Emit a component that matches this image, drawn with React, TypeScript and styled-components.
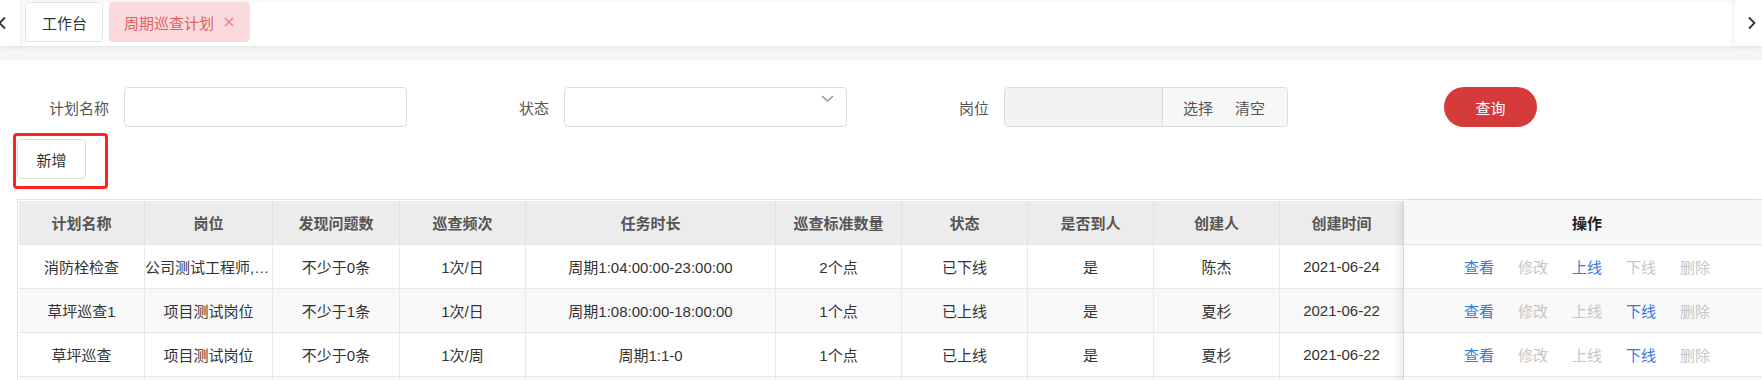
import styled, { createGlobalStyle } from 'styled-components';

const GlobalStyle = createGlobalStyle`
  html, body {
    margin: 0;
    padding: 0;
    background: #fff;
    overflow: hidden;
  }
  body {
    width: 1762px;
    font-family: "Liberation Sans", "Noto Sans CJK SC", sans-serif;
    font-size: 15px;
    color: #333;
  }
  * { box-sizing: border-box; }
`;

const Page = styled.div`
  width: 1762px;
  height: 380px;
  overflow: hidden;
`;

/* ---------- tab bar ---------- */

const TabBar = styled.div`
  display: flex;
  height: 46px;
  background: #fff;
  box-shadow: inset 0 3px 4px -2px rgba(0, 0, 0, 0.06), 0 2px 4px rgba(0, 0, 0, 0.05);
  position: relative;
  z-index: 1;
`;

const ArrowBtn = styled.div<{ $side: 'left' | 'right' }>`
  width: ${p => (p.$side === 'left' ? 20 : 27)}px;
  flex-shrink: 0;
  display: flex;
  align-items: center;
  justify-content: ${p => (p.$side === 'left' ? 'flex-start' : 'flex-end')};
  padding-right: ${p => (p.$side === 'right' ? 5 : 0)}px;
  background: #fff;
  box-shadow: ${p => (p.$side === 'left' ? '3px 0 4px rgba(0,0,0,0.05)' : '-3px 0 4px rgba(0,0,0,0.05)')};
  z-index: 1;
  overflow: hidden;
`;

const TabList = styled.div`
  flex: 1;
  display: flex;
  align-items: flex-start;
  gap: 6px;
  padding: 2px 5px 0;
`;

const Tab = styled.div<{ $active?: boolean }>`
  height: 40px;
  display: flex;
  align-items: center;
  gap: 10px;
  padding: ${p => (p.$active ? '0 15px 0 14px' : '0 15px 0 16px')};
  border: 1px solid ${p => (p.$active ? '#fbdadd' : '#e4e4e4')};
  border-radius: 4px;
  background: ${p => (p.$active ? '#fbdadd' : '#fff')};
  color: ${p => (p.$active ? '#e0605f' : '#333')};
  font-size: 15px;
`;

const TabClose = styled.svg`
  flex-shrink: 0;
`;

const GrayStrip = styled.div`
  height: 14px;
  background: #f4f5f7;
`;

/* ---------- search form ---------- */

const Content = styled.div`
  padding: 27px 0 0 13px;
`;

const FormRow = styled.div`
  display: flex;
  padding-left: 1px;
`;

const FormItem = styled.div`
  width: 440px;
  flex-shrink: 0;
  display: flex;
  align-items: center;
`;

const Label = styled.label`
  width: 110px;
  flex-shrink: 0;
  padding-right: 15px;
  text-align: right;
  color: #555;
  font-size: 15px;
`;

const TextInput = styled.div`
  width: 283px;
  height: 40px;
  border: 1px solid #dcdcdc;
  border-radius: 4px;
  background: #fff;
  position: relative;
`;

const SelectArrow = styled.svg`
  position: absolute;
  right: 12px;
  top: 7px;
`;

const InputGroup = styled.div`
  width: 284px;
  height: 40px;
  display: flex;
  border: 1px solid #dcdcdc;
  border-radius: 4px;
  overflow: hidden;
`;

const GroupField = styled.div`
  flex: 1;
  background: #f2f2f2;
`;

const GroupActions = styled.div`
  width: 125px;
  display: flex;
  align-items: center;
  gap: 22px;
  padding-left: 20px;
  background: #f7f7f7;
  border-left: 1px solid #dcdcdc;
  color: #555;
  font-size: 15px;
`;

const QueryButton = styled.button`
  width: 93px;
  height: 40px;
  border: none;
  border-radius: 20px;
  background: #d63b3b;
  color: #fff;
  font-family: inherit;
  font-size: 15px;
`;

const Highlight = styled.div`
  display: inline-block;
  margin-top: 6px;
  padding: 3px 19px 7px 1px;
  border: 3px solid #ff2424;
  border-radius: 4px;
`;

const PlainButton = styled.button`
  width: 69px;
  height: 40px;
  border: 1px solid #dcdcdc;
  border-radius: 4px;
  background: #fff;
  color: #333;
  font-family: inherit;
  font-size: 15px;
  display: block;
`;

/* ---------- table ---------- */

const TableWrap = styled.div`
  display: flex;
  margin: 10px 0 0 4px;
  padding: 1px 0 0 1px;
  border-top: 1px solid #e2e2e2;
  border-left: 1px solid #e2e2e2;
`;

const MainGrid = styled.div`
  display: grid;
  grid-template-columns: 126px 128px 127px 126px 250px 126px 126px 126px 126px 124px;
  flex-shrink: 0;
`;

const Cell = styled.div<{ $head?: boolean; $striped?: boolean }>`
  height: 44px;
  display: flex;
  align-items: center;
  justify-content: center;
  border-right: 1px solid ${p => (p.$head ? '#e2e2e2' : '#e8e8e8')};
  border-bottom: 1px solid #e6e6e6;
  background: ${p => (p.$head ? '#ececec' : p.$striped ? '#f8f8f8' : '#fff')};
  color: ${p => (p.$head ? '#555' : '#333')};
  font-weight: ${p => (p.$head ? 'bold' : 'normal')};
  font-size: 15px;
  white-space: nowrap;
  overflow: hidden;
`;

const Ellipsis = styled.span`
  display: block;
  width: 100%;
  overflow: hidden;
  text-overflow: ellipsis;
  white-space: nowrap;
  text-align: center;
`;

const OpsPanel = styled.div`
  width: 366px;
  flex-shrink: 0;
  position: relative;
  z-index: 1;
  box-shadow: -5px 0 8px -2px rgba(0, 0, 0, 0.1);
`;

const OpsCell = styled.div<{ $head?: boolean; $striped?: boolean }>`
  height: 44px;
  display: flex;
  align-items: center;
  justify-content: center;
  gap: 24px;
  border-bottom: 1px solid #e6e6e6;
  background: ${p => (p.$head ? '#f7f7f7' : p.$striped ? '#f8f8f8' : '#fff')};
  color: #222;
  font-weight: ${p => (p.$head ? 'bold' : 'normal')};
  font-size: 15px;
`;

const OpLink = styled.a<{ $enabled?: boolean }>`
  color: ${p => (p.$enabled ? '#3478e5' : '#c6c6c6')};
  text-decoration: none;
  font-size: 15px;
`;

const columns = ['计划名称', '岗位', '发现问题数', '巡查频次', '任务时长', '巡查标准数量', '状态', '是否到人', '创建人', '创建时间'];

const rows = [
  {
    cells: ['消防栓检查', '公司测试工程师,项目测试岗位', '不少于0条', '1次/日', '周期1:04:00:00-23:00:00', '2个点', '已下线', '是', '陈杰', '2021-06-24'],
    online: false,
  },
  {
    cells: ['草坪巡查1', '项目测试岗位', '不少于1条', '1次/日', '周期1:08:00:00-18:00:00', '1个点', '已上线', '是', '夏杉', '2021-06-22'],
    online: true,
  },
  {
    cells: ['草坪巡查', '项目测试岗位', '不少于0条', '1次/周', '周期1:1-0', '1个点', '已上线', '是', '夏杉', '2021-06-22'],
    online: true,
  },
];

const App = () => {
  return (
    <Page>
      <GlobalStyle />
      <TabBar>
        <ArrowBtn $side="left">
          <svg width="10" height="14" viewBox="0 0 10 14" style={{ marginLeft: -3 }}>
            <path d="M8 1.5 L2.5 7 L8 12.5" fill="none" stroke="#2f3340" strokeWidth="1.8" />
          </svg>
        </ArrowBtn>
        <TabList>
          <Tab>工作台</Tab>
          <Tab $active>
            周期巡查计划
            <TabClose width="10" height="10" viewBox="0 0 10 10">
              <path d="M1 1 L9 9 M9 1 L1 9" stroke="#ec8585" strokeWidth="1.6" />
            </TabClose>
          </Tab>
        </TabList>
        <ArrowBtn $side="right">
          <svg width="10" height="14" viewBox="0 0 10 14">
            <path d="M2 1.5 L7.5 7 L2 12.5" fill="none" stroke="#2f3340" strokeWidth="1.8" />
          </svg>
        </ArrowBtn>
      </TabBar>
      <GrayStrip />

      <Content>
        <FormRow>
          <FormItem>
            <Label>计划名称</Label>
            <TextInput />
          </FormItem>
          <FormItem>
            <Label>状态</Label>
            <TextInput>
              <SelectArrow width="13" height="7" viewBox="0 0 13 7">
                <path d="M1 1 L6.5 6 L12 1" fill="none" stroke="#8d939c" strokeWidth="1.4" />
              </SelectArrow>
            </TextInput>
          </FormItem>
          <FormItem>
            <Label>岗位</Label>
            <InputGroup>
              <GroupField />
              <GroupActions>
                <span>选择</span>
                <span>清空</span>
              </GroupActions>
            </InputGroup>
          </FormItem>
          <FormItem>
            <Label />
            <QueryButton>查询</QueryButton>
          </FormItem>
        </FormRow>

        <Highlight>
          <PlainButton>新增</PlainButton>
        </Highlight>

        <TableWrap>
          <MainGrid>
            {columns.map(c => (
              <Cell key={c} $head>{c}</Cell>
            ))}
            {rows.map((r, i) =>
              r.cells.map((c, j) => (
                <Cell key={`${i}-${j}`} $striped={i % 2 === 1}>
                  {j === 1 ? <Ellipsis>{c}</Ellipsis> : c}
                </Cell>
              ))
            )}
            {columns.map(c => (
              <Cell key={`filler-${c}`} $striped />
            ))}
          </MainGrid>
          <OpsPanel>
            <OpsCell $head>操作</OpsCell>
            {rows.map((r, i) => (
              <OpsCell key={i} $striped={i % 2 === 1}>
                <OpLink $enabled>查看</OpLink>
                <OpLink>修改</OpLink>
                <OpLink $enabled={!r.online}>上线</OpLink>
                <OpLink $enabled={r.online}>下线</OpLink>
                <OpLink>删除</OpLink>
              </OpsCell>
            ))}
            <OpsCell $striped />
          </OpsPanel>
        </TableWrap>
      </Content>
    </Page>
  );
};

export default App;
